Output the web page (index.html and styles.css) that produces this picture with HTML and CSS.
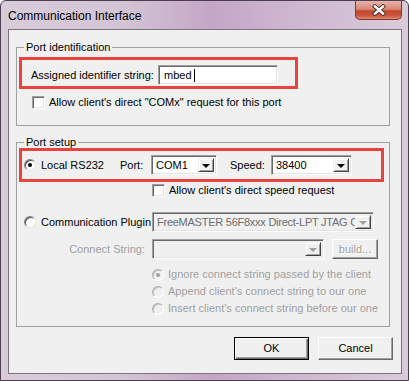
FILE: index.html
```html
<!DOCTYPE html>
<html lang="en">
<head>
    <meta charset="UTF-8">
    <title>Communication Interface</title>
    <link rel="stylesheet" href="styles.css">
</head>
<body>
    <div class="window">
        <div class="titlebar">
            <span class="title">Communication Interface</span>
            <div class="close">
                <svg width="16" height="12" viewBox="0 0 16 12">
                    <path d="M4 2.5 L12 9.5 M12 2.5 L4 9.5" stroke="#3b2c2c" stroke-width="4.2" stroke-linecap="square"/>
                    <path d="M4 2.5 L12 9.5 M12 2.5 L4 9.5" stroke="#fff" stroke-width="2.4" stroke-linecap="square"/>
                </svg>
            </div>
        </div>

        <div class="client">
            <fieldset class="group group-ident">
                <legend>Port identification</legend>
                <div class="mark mark-ident">
                    <span class="ident-label">Assigned identifier string:</span>
                    <div class="edit">mbed<span class="caret"></span></div>
                </div>
                <div class="check-row check-comx">
                    <span class="checkbox"></span>
                    <span>Allow client's direct "COMx" request for this port</span>
                </div>
            </fieldset>

            <fieldset class="group group-setup">
                <legend>Port setup</legend>
                <div class="mark mark-setup">
                    <span class="radio checked"></span>
                    <span class="radio-text local-text">Local RS232</span>
                    <span class="lbl-port">Port:</span>
                    <div class="combo combo-port"><span class="combo-text">COM1</span><span class="arrow"></span></div>
                    <span class="lbl-speed">Speed:</span>
                    <div class="combo combo-speed"><span class="combo-text">38400</span><span class="arrow"></span></div>
                </div>
                <div class="check-row check-speed">
                    <span class="checkbox"></span>
                    <span>Allow client's direct speed request</span>
                </div>
                <div class="row plugin-row">
                    <span class="radio"></span>
                    <span class="radio-text plugin-text">Communication Plugin</span>
                    <div class="combo disabled combo-plugin"><span class="combo-text plugin-value">FreeMASTER 56F8xxx Direct-LPT JTAG C</span><span class="arrow"></span></div>
                </div>
                <div class="row connect-row">
                    <span class="connect-label">Connect String:</span>
                    <div class="combo disabled combo-connect"><span class="combo-text"></span><span class="arrow"></span></div>
                    <div class="btn btn-build">build...</div>
                </div>
                <div class="radio-list">
                    <div class="radio-row"><span class="radio disabled checked"></span><span>Ignore connect string passed by the client</span></div>
                    <div class="radio-row"><span class="radio disabled"></span><span>Append client's connect string to our one</span></div>
                    <div class="radio-row"><span class="radio disabled"></span><span>Insert client's connect string before our one</span></div>
                </div>
            </fieldset>

            <div class="buttons">
                <div class="btn btn-default">OK</div>
                <div class="btn">Cancel</div>
            </div>
        </div>
    </div>
</body>
</html>
```

FILE: styles.css
```css
* { box-sizing: border-box; }
body {
    margin: 0;
    font-family: "Liberation Sans", Arial, sans-serif;
    font-size: 11px;
    line-height: 13px;
    color: #000;
}
.window {
    width: 409px;
    height: 381px;
    display: flex;
    flex-direction: column;
    padding: 0 6px 6px 7px;
    border: 1px solid #4c3e50;
    border-radius: 6px 6px 0 0;
    background: linear-gradient(90deg, #d9ccd9 0%, #d3c4d5 30%, #c4a6c6 52%, #cdb5cf 70%, #d9cbda 100%);
}
.titlebar {
    height: 28px;
    display: flex;
    justify-content: space-between;
    align-items: flex-start;
    flex-shrink: 0;
}
.title {
    font-size: 12px;
    padding-top: 8px;
    line-height: 14px;
}
.close {
    width: 47px;
    height: 19px;
    border: 1px solid #7a3a33;
    border-top: none;
    border-radius: 0 0 5px 5px;
    background: linear-gradient(#e7b3a8 0%, #d98877 45%, #c24a34 55%, #c9553c 80%, #e08a70 100%);
    display: flex;
    align-items: center;
    justify-content: center;
}
.client {
    flex: 1;
    background: #f0f0f0;
    border: 1px solid #7d7280;
    padding: 12px 11px 0 7px;
}
.group {
    margin: 0;
    padding: 0;
    border: 1px solid #a0a0a0;
    min-width: 0;
}
.group legend {
    margin-left: 7px;
    padding: 0 2px;
    line-height: 11px;
}
.group-ident { padding: 4px 0 16px 0; }
.group-setup { margin-top: 11px; padding: 0 0 9px 0; }

.mark {
    border: 3px solid #e8433f;
    margin-left: 2px;
    display: flex;
}
.mark-ident {
    width: 279px;
    height: 32px;
    padding: 5px 0 1px 9px;
    align-items: flex-start;
}
.ident-label { margin-top: 4px; width: 127px; }
.edit {
    width: 120px;
    height: 20px;
    background: #fff;
    border: 1px solid;
    border-color: #a0a0a0 #fff #fff #a0a0a0;
    box-shadow: inset 1px 1px #696969, inset -1px -1px #e3e3e3;
    padding: 3px 0 0 5px;
    display: flex;
}
.caret {
    width: 1px;
    height: 13px;
    background: #000;
    margin-left: 2px;
}

.check-row {
    display: flex;
    align-items: center;
    height: 13px;
}
.check-row .checkbox { margin-right: 4px; }
.check-comx { margin: 7px 0 0 15px; }
.check-speed { margin: 2px 0 0 135px; }
.checkbox {
    width: 13px;
    height: 13px;
    background: #fff;
    border: 1px solid;
    border-color: #a0a0a0 #fff #fff #a0a0a0;
    box-shadow: inset 1px 1px #696969, inset -1px -1px #e3e3e3;
}

.mark-setup {
    width: 365px;
    height: 34px;
    align-items: center;
    padding-left: 2px;
}
.radio {
    width: 12px;
    height: 12px;
    border-radius: 50%;
    background: #fff;
    border: 1px solid;
    border-color: #808080 #e6e6e6 #e6e6e6 #808080;
    box-shadow: inset 1px 1px #505050;
    flex-shrink: 0;
    display: flex;
    align-items: center;
    justify-content: center;
}
.radio.checked::after {
    content: "";
    width: 4px;
    height: 4px;
    border-radius: 50%;
    background: #000;
}
.radio.disabled {
    background: #f0f0f0;
    border-color: #b0b0b0 #fff #fff #b0b0b0;
    box-shadow: inset 1px 1px #c4c4c4;
}
.radio.disabled.checked::after { background: #a0a0a0; }
.radio-text { margin-left: 5px; }
.local-text { width: 79px; }
.lbl-port { width: 31px; }
.lbl-speed { width: 41px; margin-left: 13px; }

.combo {
    height: 20px;
    background: #fff;
    border: 1px solid;
    border-color: #a0a0a0 #fff #fff #a0a0a0;
    box-shadow: inset 1px 1px #696969, inset -1px -1px #e3e3e3;
    padding: 2px;
    display: flex;
    align-items: stretch;
}
.combo-text {
    flex: 1;
    padding: 1px 0 0 2px;
    white-space: nowrap;
    overflow: hidden;
}
.arrow {
    width: 16px;
    background: #f0f0f0;
    border: 1px solid;
    border-color: #f0f0f0 #404040 #404040 #f0f0f0;
    box-shadow: inset 1px 1px #fff, inset -1px -1px #a0a0a0;
    position: relative;
}
.arrow::after {
    content: "";
    position: absolute;
    left: 3px;
    top: 5px;
    border-left: 4px solid transparent;
    border-right: 4px solid transparent;
    border-top: 4px solid #000;
}
.combo-port { width: 66px; }
.combo-speed { width: 81px; }
.combo.disabled { background: #f0f0f0; }
.combo.disabled .combo-text { color: #6d6d6d; }
.combo.disabled .arrow::after { border-top-color: #a0a0a0; }

.row {
    display: flex;
    align-items: center;
}
.plugin-row { margin: 15px 0 0 7px; }
.plugin-text { width: 111px; }
.combo-plugin { width: 222px; }
.plugin-value { letter-spacing: -0.25px; }
.connect-row { margin-top: 7px; }
.connect-label {
    width: 128px;
    text-align: right;
    margin-right: 7px;
    color: #a0a0a0;
}
.combo-connect { width: 172px; height: 20px; }

.btn {
    display: flex;
    align-items: center;
    justify-content: center;
    width: 75px;
    height: 23px;
    background: #f0f0f0;
    border: 1px solid;
    border-color: #fff #696969 #696969 #fff;
    box-shadow: inset -1px -1px #a0a0a0;
}
.btn-default {
    border: 1px solid #000;
    box-shadow: inset 1px 1px #fff, inset -1px -1px #696969, inset -2px -2px #a0a0a0;
}
.btn-build {
    width: 46px;
    height: 20px;
    margin-left: 8px;
    color: #a0a0a0;
    text-shadow: 1px 1px #fff;
}

.radio-list {
    margin: 7px 0 0 135px;
    color: #a0a0a0;
}
.radio-row {
    display: flex;
    align-items: center;
    height: 17px;
}
.radio-row .radio { margin-right: 4px; }

.buttons {
    display: flex;
    justify-content: flex-end;
    gap: 9px;
    margin: 10px -3px 0 0;
}
```
